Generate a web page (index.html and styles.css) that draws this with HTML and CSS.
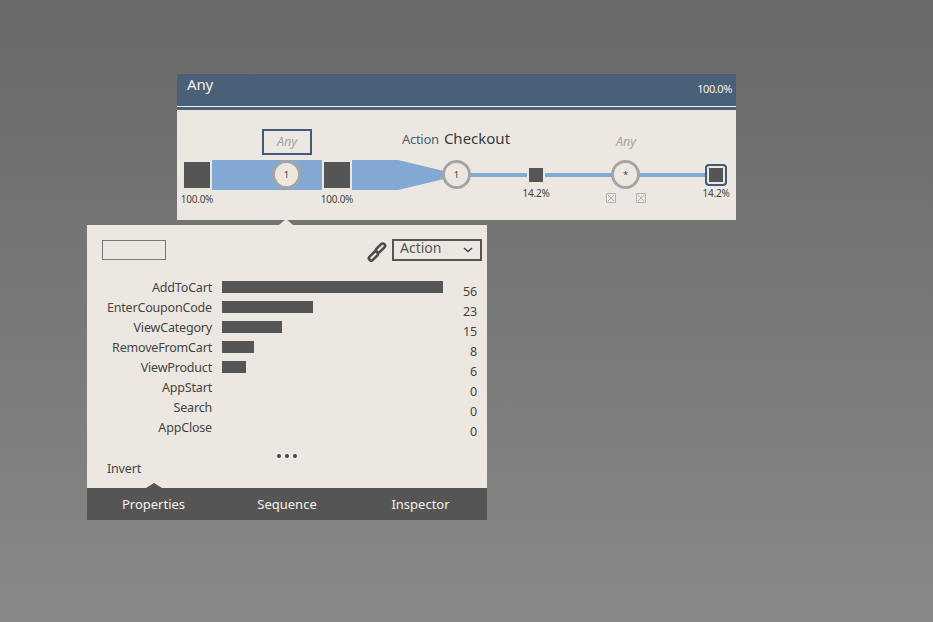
FILE: index.html
```html
<!DOCTYPE html>
<html lang="en">
<head>
<meta charset="utf-8">
<title>Funnel</title>
<link rel="stylesheet" href="styles.css">
</head>
<body>
<section class="funnel">
  <header class="funnel-head">
    <span class="head-title">Any</span>
    <span class="head-pct">100.0%</span>
  </header>
  <div class="funnel-canvas">
    <div class="any-box">Any</div>
    <div class="step-title"><span class="step-kind">Action</span> <span class="step-name">Checkout</span></div>
    <div class="any-label">Any</div>

    <div class="sq sq-a"></div>
    <div class="pct pct-a">100.0%</div>
    <div class="band band-a"></div>
    <div class="node node-a">1</div>
    <div class="sq sq-b"></div>
    <div class="pct pct-b">100.0%</div>
    <svg class="taper" width="92" height="30" viewBox="0 0 92 30"><path d="M0 0H46L92 11V19L46 30H0Z" fill="#82a9d4"/></svg>
    <div class="node node-b">1</div>
    <div class="line line-a"></div>
    <div class="sq-small"></div>
    <div class="pct pct-c">14.2%</div>
    <div class="line line-b"></div>
    <div class="node node-c">*</div>
    <svg class="xbox xbox-a" width="10" height="10" viewBox="0 0 10 10"><path d="M.5.5h9v9h-9zM2 2l6 6M8 2l-6 6" fill="none" stroke="#b5b3ae"/></svg>
    <svg class="xbox xbox-b" width="10" height="10" viewBox="0 0 10 10"><path d="M.5.5h9v9h-9zM2 2l6 6M8 2l-6 6" fill="none" stroke="#b5b3ae"/></svg>
    <div class="line line-c"></div>
    <div class="end"><div class="end-inner"></div></div>
    <div class="pct pct-d">14.2%</div>
  </div>
</section>

<section class="popup">
  <div class="popup-notch"></div>
  <div class="popup-top">
    <div class="search"></div>
    <svg class="link" width="20" height="20" viewBox="0 0 20 20"><g fill="none" stroke="#4c4c4c" stroke-width="2.6"><rect x="11.2" y="0.5" width="4.6" height="11" rx="2.3" transform="rotate(45 13.5 6)"/><rect x="4.2" y="8.5" width="4.6" height="11" rx="2.3" transform="rotate(45 6.5 14)"/></g></svg>
    <div class="select"><span class="select-text">Action</span>
      <svg width="10" height="6" viewBox="0 0 10 6"><path d="M1 1l4 3.5L9 1" fill="none" stroke="#444" stroke-width="1.5"/></svg>
    </div>
  </div>
  <div class="rows">
    <div class="row"><span class="label">AddToCart</span><span class="track"><i class="bar" style="width:221px"></i></span><span class="val">56</span></div>
    <div class="row"><span class="label">EnterCouponCode</span><span class="track"><i class="bar" style="width:91px"></i></span><span class="val">23</span></div>
    <div class="row"><span class="label">ViewCategory</span><span class="track"><i class="bar" style="width:60px"></i></span><span class="val">15</span></div>
    <div class="row"><span class="label">RemoveFromCart</span><span class="track"><i class="bar" style="width:32px"></i></span><span class="val">8</span></div>
    <div class="row"><span class="label">ViewProduct</span><span class="track"><i class="bar" style="width:24px"></i></span><span class="val">6</span></div>
    <div class="row"><span class="label">AppStart</span><span class="track"></span><span class="val">0</span></div>
    <div class="row"><span class="label">Search</span><span class="track"></span><span class="val">0</span></div>
    <div class="row"><span class="label">AppClose</span><span class="track"></span><span class="val">0</span></div>
  </div>
  <div class="dots"><i></i><i></i><i></i></div>
  <div class="invert">Invert</div>
  <nav class="tabs">
    <span class="tab tab-active">Properties</span>
    <span class="tab">Sequence</span>
    <span class="tab">Inspector</span>
  </nav>
</section>
</body>
</html>
```

FILE: styles.css
```css
* { box-sizing: border-box; }
html, body { margin: 0; height: 100%; }
body {
  width: 933px;
  height: 622px;
  overflow: hidden;
  position: relative;
  background: linear-gradient(#696969, #888888);
  font-family: "Noto Sans", "Open Sans", sans-serif;
  color: #444;
}
.funnel {
  position: absolute;
  left: 177px;
  top: 74px;
  width: 559px;
  height: 146px;
  background: #ece8e1;
  display: flex;
  flex-direction: column;
}
.funnel-head {
  height: 36px;
  background: #4a5f78;
  border-bottom: 3px solid #4a5f78;
  position: relative;
  display: flex;
  justify-content: space-between;
  color: #f2f0ea;
  padding: 0 4px 0 10px;
}
.funnel-head::after {
  content: "";
  position: absolute;
  left: 0;
  right: 0;
  top: 32px;
  height: 1px;
  background: #f2f0ea;
}
.head-title { font-size: 15px; line-height: 20px; letter-spacing: -0.2px; }
.head-pct { font-size: 11px; line-height: 30px; letter-spacing: -0.4px; }
.funnel-canvas { position: relative; flex: 1; }
.any-box {
  position: absolute;
  left: 85px;
  top: 19px;
  width: 50px;
  height: 26px;
  border: 2px solid #43597a;
  color: #a5a5a5;
  font-style: italic;
  font-size: 12.5px;
  line-height: 22px;
  text-align: center;
}
.step-title {
  position: absolute;
  left: 225px;
  top: 16px;
  line-height: 24px;
  white-space: nowrap;
}
.step-kind { font-size: 13px; color: #4a5f78; letter-spacing: -0.3px; }
.step-name { font-size: 15px; color: #3a3a3a; letter-spacing: 0; margin-left: 1px; }
.any-label {
  position: absolute;
  left: 424px;
  top: 22px;
  width: 50px;
  text-align: center;
  color: #a5a5a5;
  font-style: italic;
  font-size: 12.5px;
  line-height: 20px;
}
.sq { position: absolute; top: 52px; width: 26px; height: 26px; background: #555; }
.sq-a { left: 7px; }
.sq-b { left: 147px; }
.band { position: absolute; top: 50px; height: 30px; background: #82a9d4; }
.band-a { left: 35px; width: 110px; }
.taper { position: absolute; left: 175px; top: 50px; display: block; }
.node {
  position: absolute;
  top: 50px;
  width: 29px;
  height: 29px;
  border-radius: 50%;
  border: 3px solid #a5a5a5;
  background: #ece8e1;
  font-size: 9.5px;
  line-height: 23px;
  text-align: center;
  color: #444;
}
.node-a { left: 95px; }
.node-b { left: 265px; }
.node-c { left: 434px; }
.line { position: absolute; top: 63px; height: 4px; background: #82a9d4; }
.line-a { left: 293px; width: 57px; }
.line-b { left: 368px; width: 67px; }
.line-c { left: 462px; width: 67px; }
.sq-small { position: absolute; left: 352px; top: 58px; width: 14px; height: 14px; background: #555; }
.end {
  position: absolute;
  left: 528px;
  top: 54px;
  width: 22px;
  height: 22px;
  border: 2px solid #43597a;
  border-radius: 4px;
  background: #ece8e1;
  display: flex;
  align-items: center;
  justify-content: center;
}
.end-inner { width: 14px; height: 14px; background: #555; }
.pct {
  position: absolute;
  width: 50px;
  text-align: center;
  font-size: 10px;
  line-height: 14px;
  letter-spacing: -0.25px;
  color: #444;
}
.pct-a { left: -5px; top: 82px; }
.pct-b { left: 135px; top: 82px; }
.pct-c { left: 334px; top: 76px; }
.pct-d { left: 514px; top: 76px; }
.xbox { position: absolute; top: 83px; display: block; }
.xbox-a { left: 429px; }
.xbox-b { left: 459px; }

.popup {
  position: absolute;
  left: 87px;
  top: 225px;
  width: 400px;
  height: 295px;
  background: #ece8e1;
  display: flex;
  flex-direction: column;
}
.popup-notch {
  position: absolute;
  left: 192px;
  top: -6px;
  width: 0;
  height: 0;
  border-left: 7px solid transparent;
  border-right: 7px solid transparent;
  border-bottom: 6px solid #ece8e1;
}
.popup-top {
  display: flex;
  align-items: center;
  padding: 13px 5px 0 15px;
  height: 37px;
}
.search { width: 64px; height: 20px; border: 1px solid #777; }
.link { margin-left: auto; margin-right: 5px; margin-top: 4px; display: block; }
.select {
  width: 90px;
  height: 22px;
  border: 2px solid #555;
  display: flex;
  align-items: center;
  justify-content: space-between;
  padding: 0 7px 0 6px;
  font-size: 14px;
  color: #555;
}
.select-text { line-height: 14px; margin-top: -4px; }
.rows { margin-top: 16px; display: flex; flex-direction: column; }
.row {
  display: grid;
  grid-template-columns: 125px 10px 221px 34px;
  height: 20px;
  align-items: start;
  font-size: 12.5px;
  line-height: 20px;
  letter-spacing: -0.18px;
}
.label { grid-column: 1; text-align: right; white-space: nowrap; color: #444; }
.track { grid-column: 3; height: 12px; margin-top: 3px; display: block; }
.bar { display: block; height: 12px; background: #555; }
.val { grid-column: 4; text-align: right; padding-top: 4px; color: #444; }
.dots { display: flex; gap: 4px; justify-content: center; margin-top: 16px; height: 4px; }
.dots i { width: 4px; height: 4px; border-radius: 50%; background: #444; }
.invert { font-size: 12.5px; line-height: 18px; margin: 2px 0 0 20px; letter-spacing: -0.18px; color: #444; }
.tabs {
  margin-top: auto;
  height: 32px;
  background: #555;
  display: grid;
  grid-template-columns: 133px 134px 133px;
  position: relative;
  color: #f4f2ec;
  font-size: 13px;
  line-height: 32px;
  text-align: center;
}
.tab { position: relative; }
.tab-active::before {
  content: "";
  position: absolute;
  left: 59px;
  top: -5px;
  width: 0;
  height: 0;
  border-left: 8px solid transparent;
  border-right: 8px solid transparent;
  border-bottom: 5px solid #555;
}
```
